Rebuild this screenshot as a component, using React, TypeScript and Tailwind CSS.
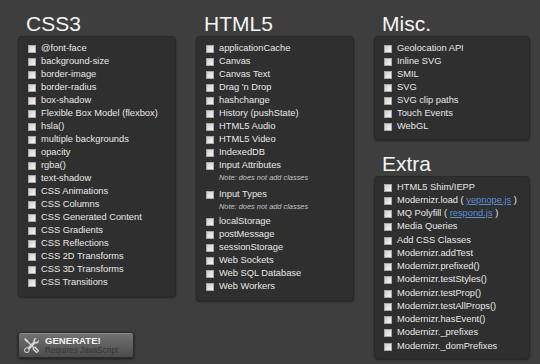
import type { ReactNode } from "react";
import { BsTools } from "react-icons/bs";

const css3 = [
	"@font-face",
	"background-size",
	"border-image",
	"border-radius",
	"box-shadow",
	"Flexible Box Model (flexbox)",
	"hsla()",
	"multiple backgrounds",
	"opacity",
	"rgba()",
	"text-shadow",
	"CSS Animations",
	"CSS Columns",
	"CSS Generated Content",
	"CSS Gradients",
	"CSS Reflections",
	"CSS 2D Transforms",
	"CSS 3D Transforms",
	"CSS Transitions",
];

const html5Top = [
	"applicationCache",
	"Canvas",
	"Canvas Text",
	"Drag 'n Drop",
	"hashchange",
	"History (pushState)",
	"HTML5 Audio",
	"HTML5 Video",
	"IndexedDB",
	"Input Attributes",
];

const html5Bottom = [
	"localStorage",
	"postMessage",
	"sessionStorage",
	"Web Sockets",
	"Web SQL Database",
	"Web Workers",
];

const misc = [
	"Geolocation API",
	"Inline SVG",
	"SMIL",
	"SVG",
	"SVG clip paths",
	"Touch Events",
	"WebGL",
];

const Link = ({ children }: { children: ReactNode }) => (
	<span className="text-[#5b8fd0] underline">{children}</span>
);

const extra: ReactNode[] = [
	"HTML5 Shim/IEPP",
	<>
		Modernizr.load ( <Link>yepnope.js</Link> )
	</>,
	<>
		MQ Polyfill ( <Link>respond.js</Link> )
	</>,
	"Media Queries",
	"Add CSS Classes",
	"Modernizr.addTest",
	"Modernizr.prefixed()",
	"Modernizr.testStyles()",
	"Modernizr.testProp()",
	"Modernizr.testAllProps()",
	"Modernizr.hasEvent()",
	"Modernizr._prefixes",
	"Modernizr._domPrefixes",
];

function Item({ label, tall }: { label: ReactNode; tall?: boolean }) {
	return (
		<div
			className={`flex items-center pl-[9px] whitespace-nowrap ${tall ? "h-[13.25px]" : "h-[13px]"}`}
		>
			<span className="w-[8px] h-[8px] mr-[5px] shrink-0 border border-[#a9a9a9] bg-gradient-to-br from-[#cfcfcf] to-[#f6f6f6]" />
			<span>{label}</span>
		</div>
	);
}

function Note() {
	return (
		<div className="h-[12px] leading-[12px] pl-[22px] text-[7.4px] italic text-[#c4c4c4]">
			Note: does not add classes
		</div>
	);
}

function Title({ children }: { children: ReactNode }) {
	return (
		<h2 className="pl-[8px] text-[21px] leading-[25px] text-[#f4f4f4]">
			{children}
		</h2>
	);
}

function Panel({ children, className }: { children: ReactNode; className: string }) {
	return (
		<div
			className={`rounded-[4px] bg-[#2f2f2f] border border-[#2a2a2a] shadow-[0_1px_2px_rgba(0,0,0,0.45)] ${className}`}
		>
			{children}
		</div>
	);
}

export default function App() {
	return (
		<div
			className="w-[540px] h-[364px] overflow-hidden bg-[#3e3e3e] text-[#e8e8e8] text-[9.3px] flex gap-[20px] pl-[18px] pt-[11px]"
			style={{ fontFamily: '"Liberation Sans", Arial, sans-serif' }}
		>
			<div className="w-[158px] flex flex-col">
				<Title>CSS3</Title>
				<Panel className="pt-[5px] pb-[7px]">
					{css3.map((c) => (
						<Item key={c} label={c} />
					))}
				</Panel>
				<button
					type="button"
					className="mt-[35px] w-[116px] h-[26px] flex items-center gap-[6px] pl-[5px] rounded-[3px] border border-[#2c2c2c] bg-gradient-to-b from-[#727272] to-[#4c4c4c] shadow-[0_1px_3px_rgba(0,0,0,0.6),inset_0_1px_0_rgba(255,255,255,0.2)] text-left"
				>
					<BsTools className="w-[15px] h-[15px] text-[#d4d4d4] shrink-0" />
					<span className="flex flex-col">
						<span className="text-[9.6px] leading-[11px] font-bold text-[#f2f2f2]">
							GENERATE!
						</span>
						<span className="text-[8.2px] leading-[10px] text-[#353535]">
							Requires JavaScript
						</span>
					</span>
				</button>
			</div>

			<div className="w-[158px] flex flex-col">
				<Title>HTML5</Title>
				<Panel className="pt-[5px] pb-[7px]">
					{html5Top.map((c) => (
						<Item key={c} label={c} />
					))}
					<Note />
					<div className="mt-[4px]">
						<Item label="Input Types" />
					</div>
					<Note />
					<div className="mt-[2px]">
						{html5Bottom.map((c) => (
							<Item key={c} label={c} />
						))}
					</div>
				</Panel>
			</div>

			<div className="w-[156px] flex flex-col">
				<Title>Misc.</Title>
				<Panel className="pt-[5px] pb-[6px]">
					{misc.map((c) => (
						<Item key={c} label={c} />
					))}
				</Panel>
				<div className="mt-[11px]">
					<Title>Extra</Title>
				</div>
				<Panel className="pt-[4px] pb-[5px]">
					{extra.map((c, i) => (
						<Item key={i} label={c} tall />
					))}
				</Panel>
			</div>
		</div>
	);
}
